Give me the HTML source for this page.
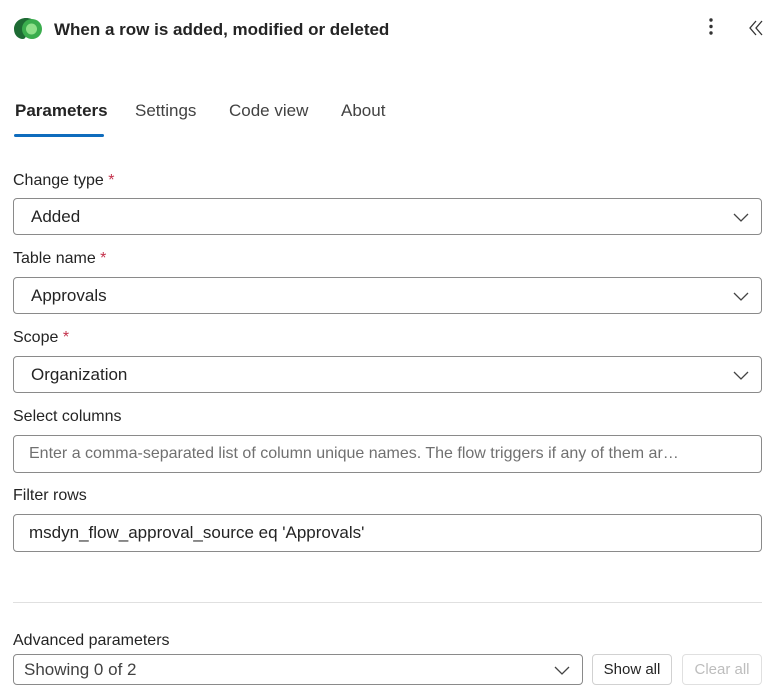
<!DOCTYPE html><html><head><style>
body{margin:0;width:775px;height:698px;background:#fff;font-family:"Liberation Sans",sans-serif;color:#242424;position:relative;overflow:hidden}
.a{position:absolute}
.lbl{position:absolute;left:13px;font-size:16px}
.req{color:#c4314b}
.in{position:absolute;left:13px;width:749px;border:1px solid #8a8a8a;border-radius:4px;box-sizing:border-box;font-size:17px;padding-left:17px;display:flex;align-items:center}
.chev{position:absolute;right:12px;top:50%;margin-top:-5px}
.btn{position:absolute;top:654px;height:31px;border:1px solid #d1d1d1;border-radius:4px;box-sizing:border-box;font-size:15px;display:flex;align-items:center;justify-content:center}
</style></head><body>
<svg class="a" style="left:13px;top:17px" width="32" height="24" viewBox="0 0 32 24"><path d="M13 1C6 1 1 6 1 12c0 6 4 10 9 10 2 0 3-2 3-4v-6c0-4 3-7 7-7h2C20 2 17 1 13 1z" fill="#1e6b34"/><circle cx="19" cy="12" r="10" fill="#3aad4d"/><circle cx="18.5" cy="12" r="5.5" fill="#8fe08a"/></svg>
<div class="a" style="left:54px;top:20px;font-size:17px;font-weight:bold">When a row is added, modified or deleted</div>
<svg class="a" style="left:705px;top:17px" width="12" height="20"><circle cx="6" cy="3" r="1.7" fill="#333"/><circle cx="6" cy="9.5" r="1.7" fill="#333"/><circle cx="6" cy="16" r="1.7" fill="#333"/></svg>
<svg class="a" style="left:748px;top:20px" width="16" height="16" fill="none" stroke="#333" stroke-width="1.3"><path d="M8 1L2 8l6 7M14 1L8 8l6 7"/></svg>
<div class="a" style="left:15px;top:101px;font-size:17px;font-weight:bold">Parameters</div>
<div class="a" style="left:14px;top:134px;width:90px;height:3px;background:#0f6cbd;border-radius:2px"></div>
<div class="a" style="left:135px;top:101px;font-size:17px;color:#424242">Settings</div>
<div class="a" style="left:229px;top:101px;font-size:17px;color:#424242">Code view</div>
<div class="a" style="left:341px;top:101px;font-size:17px;color:#424242">About</div>

<div class="lbl" style="top:172px">Change type <span class="req">*</span></div>
<div class="in" style="top:198px;height:37px">Added<svg class="chev" width="16" height="10" fill="none" stroke="#444" stroke-width="1.3"><path d="M1 2l7 7 7-7"/></svg></div>
<div class="lbl" style="top:250px">Table name <span class="req">*</span></div>
<div class="in" style="top:277px;height:37px">Approvals<svg class="chev" width="16" height="10" fill="none" stroke="#444" stroke-width="1.3"><path d="M1 2l7 7 7-7"/></svg></div>
<div class="lbl" style="top:329px">Scope <span class="req">*</span></div>
<div class="in" style="top:356px;height:37px">Organization<svg class="chev" width="16" height="10" fill="none" stroke="#444" stroke-width="1.3"><path d="M1 2l7 7 7-7"/></svg></div>
<div class="lbl" style="top:408px">Select columns</div>
<div class="in" style="top:435px;height:38px;padding-left:15px;color:#707070;white-space:nowrap;overflow:hidden;font-size:16px">Enter a comma-separated list of column unique names. The flow triggers if any of them ar…</div>
<div class="lbl" style="top:487px">Filter rows</div>
<div class="in" style="top:514px;height:38px;padding-left:15px">msdyn_flow_approval_source eq 'Approvals'</div>
<div class="a" style="left:13px;top:602px;width:749px;height:1px;background:#e0e0e0"></div>
<div class="lbl" style="top:632px">Advanced parameters</div>
<div class="in" style="top:654px;height:31px;width:570px;padding-left:10px;color:#424242">Showing 0 of 2<svg class="chev" width="16" height="10" fill="none" stroke="#444" stroke-width="1.3"><path d="M1 2l7 7 7-7"/></svg></div>
<div class="btn" style="left:592px;width:80px">Show all</div>
<div class="btn" style="left:682px;width:80px;color:#bdbdbd;border-color:#e0e0e0">Clear all</div>
</body></html>
